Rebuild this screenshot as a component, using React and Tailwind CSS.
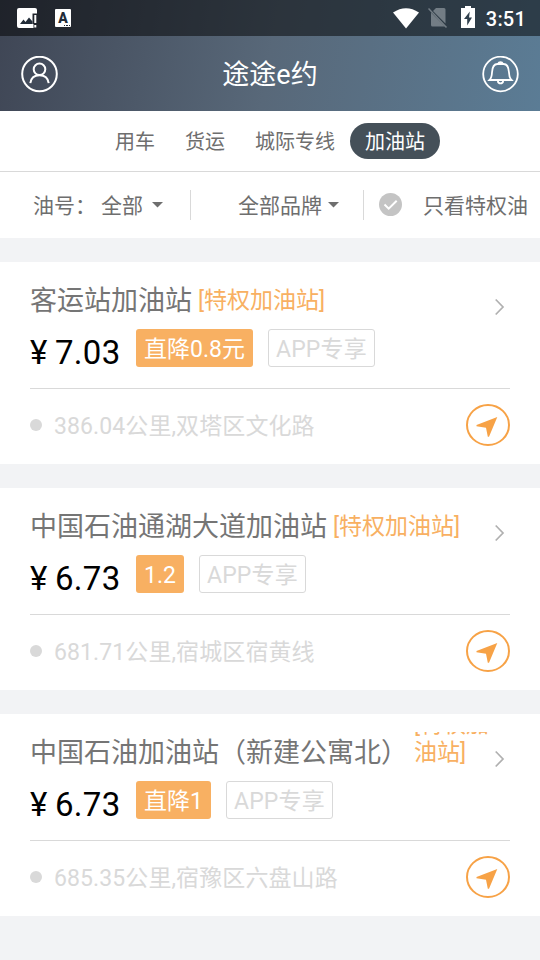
import React, { useState } from "react";

const tabs = ["用车", "货运", "城际专线", "加油站"];

const stations = [
  {
    name: "客运站加油站",
    price: "7.03",
    discount: "直降0.8元",
    address: "386.04公里,双塔区文化路",
  },
  {
    name: "中国石油通湖大道加油站",
    price: "6.73",
    discount: "1.2",
    address: "681.71公里,宿城区宿黄线",
  },
  {
    name: "中国石油加油站（新建公寓北）",
    price: "6.73",
    discount: "直降1",
    address: "685.35公里,宿豫区六盘山路",
    wrapTag: true,
  },
];

const StatusBar = () => (
  <div className="flex h-9 items-center justify-between bg-[#000000]/50 pr-[14px] pl-[17px] text-white">
    <div className="flex items-center gap-[17px]">
      <svg width="21" height="20" viewBox="0 0 21 20">
        <path
          d="M2 0h16a2 2 0 0 1 2 2v3.500h-4.500V16h1V20H2a2 2 0 0 1-2-2V2a2 2 0 0 1 2-2z"
          fill="#fff"
        />
        <path d="M3 16l3.500-4.500 2 2.500 3.500-4.500 3.500 4V16z" fill="#222c38" />
        <path d="M17.300 7h2v8h-2zM17.300 17h2v2.500h-2z" fill="#fff" />
      </svg>
      <div className="relative flex h-[18px] w-4 items-center justify-center rounded-[1px] bg-white pb-px font-[Roboto] text-[14px] leading-none font-black text-[#222c38]">
        A
        <span className="absolute right-px bottom-px flex gap-px">
          <i className="size-[1.5px] bg-[#222c38]" />
          <i className="size-[1.5px] bg-[#222c38]" />
          <i className="size-[1.5px] bg-[#222c38]" />
        </span>
      </div>
    </div>
    <div className="flex items-center">
      <svg width="26" height="21" viewBox="0 0 26 21" className="mr-[9px]">
        <path d="M0 4.500Q13-4 26 4.500L13 20.500z" fill="#fff" />
      </svg>
      <svg width="20" height="22" viewBox="0 0 20 22" className="mr-[13px]">
        <path
          d="M8 1h8a1.500 1.500 0 0 1 1.500 1.500V16.500L5 4zM3 5.500L17 19.500H4.500A1.500 1.500 0 0 1 3 18z"
          fill="#737d85"
        />
        <path d="M.5 1.500L18.500 20.500" stroke="#737d85" strokeWidth="1.500" />
      </svg>
      <svg width="14" height="22" viewBox="0 0 14 22" className="mr-[11px] mb-[2px]">
        <path d="M4 0h6v2h4v20H0V2h4z" fill="#fff" />
        <path d="M8.800 5.500L3 13h3.200v6.500L11 11.500H8z" fill="#30404d" />
      </svg>
      <span className="pt-[2px] font-[Roboto] text-[20px] leading-none font-medium tracking-[0.2px]">
        3:51
      </span>
    </div>
  </div>
);

const Header = () => (
  <div className="flex h-[75px] items-center justify-between px-[21px] pt-px text-white">
    <svg width="37" height="37" viewBox="0 0 37 37" fill="none" stroke="#fff" strokeWidth="2">
      <circle cx="18.500" cy="18" r="17.300" />
      <circle cx="18.500" cy="13.300" r="5.800" />
      <path d="M9.300 27.200c.6-4.800 4-8 9.200-8s8.600 3.200 9.200 8" />
    </svg>
    <h1 className="pt-[3px] text-[27px] leading-none font-normal">途途e约</h1>
    <svg width="37" height="37" viewBox="0 0 37 37" fill="none" stroke="#fff" strokeWidth="1.800">
      <circle cx="18.500" cy="18" r="17.300" />
      <path d="M7.500 24h22c-1.800-1.700-2.300-3.500-2.500-7.500-.3-5.500-1.800-8.500-5.500-8.500h-6c-3.700 0-5.200 3-5.500 8.500-.2 4-.7 5.800-2.500 7.500z" />
      <path d="M16.300 7.500c.5-1.700 3.900-1.700 4.400 0zM15.800 25c.5 3.200 4.900 3.200 5.400 0" />
    </svg>
  </div>
);

const Caret = () => (
  <svg width="11" height="6" viewBox="0 0 11 6">
    <path d="M0 0h11L5.500 5.500z" fill="#6e6e6e" />
  </svg>
);

const FilterBar = () => {
  const [onlyPrivilege, setOnlyPrivilege] = useState(false);

  return (
    <div className="flex h-[66px] items-center bg-white text-[21px] leading-none text-[#6e6e6e]">
      <div className="flex w-[190px] items-center pl-[33px]">
        <span className="w-[68px] pt-[2px] whitespace-nowrap">油号：</span>
        <span className="mr-[9px] pt-[2px]">全部</span>
        <Caret />
      </div>
      <div className="h-[30px] w-px bg-[#d9d9d9]" />
      <div className="flex w-[172px] items-center pl-[47px]">
        <span className="mr-[6px] pt-[2px] whitespace-nowrap">全部品牌</span>
        <Caret />
      </div>
      <div className="h-[30px] w-px bg-[#d9d9d9]" />
      <button
        className="flex items-center pl-[15px] whitespace-nowrap"
        onClick={() => setOnlyPrivilege(!onlyPrivilege)}
      >
        <svg width="23" height="23" viewBox="0 0 23 23" className="mr-[21px] mb-px">
          <circle cx="11.500" cy="11.500" r="11.500" fill={onlyPrivilege ? "#f7a246" : "#c4c4c4"} />
          <path d="M5.500 11.500l4.200 4.200 8-8" fill="none" stroke="#fff" strokeWidth="2" />
        </svg>
        <span className="pt-[2px]">只看特权油</span>
      </button>
    </div>
  );
};

const StationCard = ({ station }) => (
  <div className="h-[202px] bg-white px-[30px] pt-[18px]">
    <div className="flex h-[108px] justify-between">
      <div>
        <div className="flex h-[38px] items-center overflow-hidden">
          <h2 className="pt-[3px] text-[27px] leading-[38px] font-normal whitespace-nowrap text-[#757575]">
            {station.name}
          </h2>
          {station.wrapTag ? (
            <div className="-mr-2 ml-[6px] flex h-[38px] w-[84px] items-end text-[23px] leading-[28px] text-[#f8b062]">
              <span className="mb-[3px]">[特权加油站]</span>
            </div>
          ) : (
            <span className="ml-[6px] pt-[4px] text-[23px] text-[#f8b062]">[特权加油站]</span>
          )}
        </div>
        <div className="mt-[11px] flex items-start">
          <div className="flex w-[106px] items-baseline pt-[7px] text-[33px] leading-none whitespace-nowrap text-black">
            <span className="w-[25px]">¥</span>
            <span className="tracking-[0.3px]">{station.price}</span>
          </div>
          <div className="h-[38px] rounded-[3px] bg-[#f8b062] px-2 text-[23px] leading-[42px] text-white">
            {station.discount}
          </div>
          <div className="ml-[15px] h-[38px] rounded-[3px] border border-[#d9d9d9] px-[7px] text-[23px] leading-[40px] tracking-[0.2px] text-[#d9d9d9]">
            APP专享
          </div>
        </div>
      </div>
      <svg width="10" height="18" viewBox="0 0 10 18" className="mt-[18px] mr-[5px] shrink-0">
        <path d="M.7 1.500L8 9 .7 16.500" fill="none" stroke="#b0b0b0" strokeWidth="1.700" />
      </svg>
    </div>
    <div className="flex h-[74px] items-center border-t border-[#d9d9d9] pb-[2px]">
      <div className="size-3 rounded-full bg-[#d9d9d9]" />
      <span className="ml-3 flex-1 pt-[3px] text-[23px] leading-none tracking-[0.1px] text-[#d9d9d9]">
        {station.address}
      </span>
      <svg width="44" height="42" viewBox="0 0 44 42">
        <ellipse cx="22" cy="21" rx="21" ry="20" fill="none" stroke="#f7a246" strokeWidth="2" />
        <path d="M31.300 13L23 32.800h-1.200L20 23.800l-9.500-1.600v-1.200z" fill="#f7a246" />
      </svg>
    </div>
  </div>
);

const App = () => {
  const [activeTab, setActiveTab] = useState("加油站");

  return (
    <div className="h-[960px] w-[540px] overflow-hidden bg-[#f2f3f5] font-[Roboto,'Noto_Sans_CJK_SC',sans-serif]">
      <div className="bg-linear-[100deg] from-[#3f4655] via-[#586879] to-[#5b7c95]">
        <StatusBar />
        <Header />
      </div>

      {/* service tabs */}
      <div className="flex h-[61px] items-center border-b border-[#d9d9d9] bg-white pl-[100px]">
        {tabs.map((tab) => (
          <button
            key={tab}
            onClick={() => setActiveTab(tab)}
            className={
              tab === activeTab
                ? "h-9 rounded-full bg-[#455059] px-[15px] pt-[2px] text-[20px] leading-none text-white"
                : "h-9 px-[15px] pt-[2px] text-[20px] leading-none text-[#6e6e6e]"
            }
          >
            {tab}
          </button>
        ))}
      </div>

      <FilterBar />

      {/* station list */}
      <div className="mt-6 flex flex-col gap-6">
        {stations.map((station) => (
          <StationCard key={station.name} station={station} />
        ))}
      </div>
    </div>
  );
};

export default App;
